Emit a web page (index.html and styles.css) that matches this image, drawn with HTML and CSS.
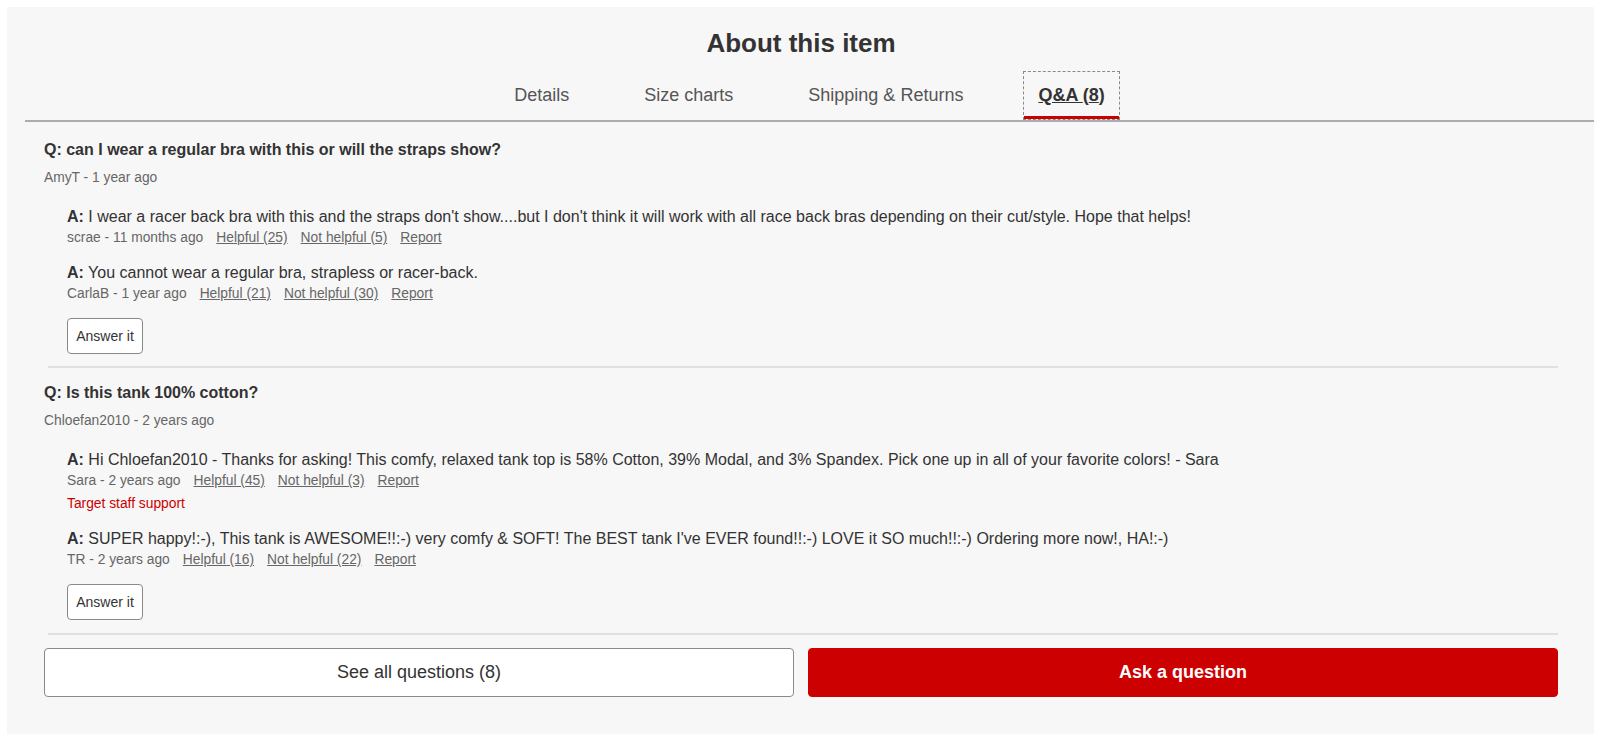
FILE: index.html
```html
<!DOCTYPE html>
<html lang="en">
<head>
<meta charset="utf-8">
<title>About this item</title>
<link rel="stylesheet" href="styles.css">
</head>
<body>
<section class="panel">
  <h2 class="title">About this item</h2>
  <nav class="tabs">
    <a class="tab"><span>Details</span></a>
    <a class="tab"><span>Size charts</span></a>
    <a class="tab"><span>Shipping &amp; Returns</span></a>
    <a class="tab active"><span><span class="u">Q&amp;A </span>(<span class="u">8</span>)</span></a>
  </nav>

  <div class="qa">
    <div class="question">
      <div class="q-text">Q: can I wear a regular bra with this or will the straps show?</div>
      <div class="meta q-meta">AmyT - 1 year ago</div>
      <div class="answers">
        <div class="answer">
          <div class="a-text"><b>A:</b> I wear a racer back bra with this and the straps don't show....but I don't think it will work with all race back bras depending on their cut/style. Hope that helps!</div>
          <div class="meta">scrae - 11 months ago<a class="link">Helpful (25)</a><a class="link">Not helpful (5)</a><a class="link">Report</a></div>
        </div>
        <div class="answer">
          <div class="a-text"><b>A:</b> You cannot wear a regular bra, strapless or racer-back.</div>
          <div class="meta">CarlaB - 1 year ago<a class="link">Helpful (21)</a><a class="link">Not helpful (30)</a><a class="link">Report</a></div>
        </div>
        <button class="answer-btn">Answer it</button>
      </div>
    </div>
    <hr class="divider">
    <div class="question">
      <div class="q-text">Q: Is this tank 100% cotton?</div>
      <div class="meta q-meta">Chloefan2010 - 2 years ago</div>
      <div class="answers">
        <div class="answer">
          <div class="a-text"><b>A:</b> Hi Chloefan2010 - Thanks for asking! This comfy, relaxed tank top is 58% Cotton, 39% Modal, and 3% Spandex. Pick one up in all of your favorite colors! - Sara</div>
          <div class="meta">Sara - 2 years ago<a class="link">Helpful (45)</a><a class="link">Not helpful (3)</a><a class="link">Report</a></div>
          <div class="staff">Target staff support</div>
        </div>
        <div class="answer">
          <div class="a-text"><b>A:</b> SUPER happy!:-), This tank is AWESOME!!:-) very comfy &amp; SOFT! The BEST tank I've EVER found!!:-) LOVE it SO much!!:-) Ordering more now!, HA!:-)</div>
          <div class="meta">TR - 2 years ago<a class="link">Helpful (16)</a><a class="link">Not helpful (22)</a><a class="link">Report</a></div>
        </div>
        <button class="answer-btn">Answer it</button>
      </div>
    </div>
    <hr class="divider last">
  </div>

  <div class="actions">
    <button class="btn btn-secondary">See all questions (8)</button>
    <button class="btn btn-primary">Ask a question</button>
  </div>
</section>
</body>
</html>
```

FILE: styles.css
```css
* { box-sizing: border-box; }

html, body { background: #ffffff; }

body {
  margin: 7px 6px 10px 7px;
  font-family: "Liberation Sans", Arial, Helvetica, sans-serif;
  color: #333333;
}

.panel {
  background: #f7f7f7;
  padding: 22px 36px 37px 37px;
}

.title {
  margin: 0;
  text-align: center;
  font-size: 26px;
  line-height: 28px;
  font-weight: 700;
  color: #333333;
}

.tabs {
  display: flex;
  justify-content: center;
  align-items: flex-end;
  gap: 45px;
  margin: 14px -36px 0 -19px;
  border-bottom: 2px solid #acacac;
}

.tab {
  display: flex;
  align-items: center;
  height: 49px;
  padding: 0 14px;
  border: 1px dashed transparent;
  font-size: 18px;
  color: #555555;
  white-space: nowrap;
  cursor: pointer;
}

.tab.active {
  border-color: #8a8a8a;
  font-weight: 700;
  color: #333333;
  box-shadow: inset 0 -3px 0 #cc0000;
}

.tab .u { text-decoration: underline; }

.qa { margin-top: 18px; }

.q-text {
  font-size: 16px;
  line-height: 20px;
  font-weight: 700;
  color: #333333;
}

.meta {
  font-size: 13.8px;
  line-height: 18px;
  color: #666666;
}

.q-meta { margin-top: 9px; }

.answers {
  padding-left: 23px;
  padding-top: 2px;
}

.answer { margin-top: 18px; }
.answer + .answer { margin-top: 16px; }

.a-text {
  font-size: 16px;
  line-height: 20px;
  color: #333333;
}

.a-text b { font-weight: 700; }

.answer .meta { margin-top: 2px; }

.link {
  margin-left: 13px;
  color: #666666;
  text-decoration: underline;
  cursor: pointer;
}

.staff {
  margin-top: 5px;
  font-size: 13.8px;
  line-height: 18px;
  color: #cc0000;
}

.answer-btn {
  display: block;
  margin-top: 15px;
  width: 76px;
  height: 36px;
  padding: 0;
  background: #ffffff;
  border: 1px solid #8a8a8a;
  border-radius: 4px;
  font-family: "Liberation Sans", Arial, Helvetica, sans-serif;
  font-size: 14px;
  color: #333333;
  cursor: pointer;
}

.divider {
  margin: 12px 0 15px 4px;
  height: 0;
  border: 0;
  border-top: 2px solid #e0e0e0;
}

.divider.last {
  margin-top: 13px;
  margin-bottom: 0;
}

.actions {
  display: flex;
  gap: 14px;
  margin-top: 13px;
}

.btn {
  flex: 1;
  height: 49px;
  border-radius: 4px;
  font-family: "Liberation Sans", Arial, Helvetica, sans-serif;
  font-size: 18px;
  cursor: pointer;
}

.btn-secondary {
  background: #ffffff;
  border: 1px solid #8a8a8a;
  color: #333333;
}

.btn-primary {
  background: #cc0000;
  border: 1px solid #cc0000;
  color: #ffffff;
  font-weight: 700;
}
```
